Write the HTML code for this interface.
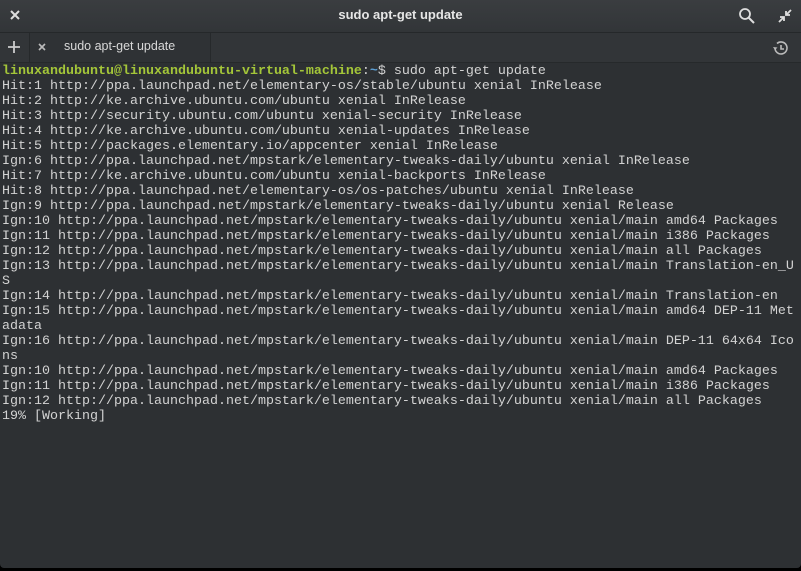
<!DOCTYPE html>
<html><head><meta charset="utf-8"><style>
html,body{margin:0;padding:0;width:801px;height:571px;overflow:hidden;background:#000;}
.win{position:absolute;left:0;top:0;width:801px;height:568px;background:#2d3033;border-radius:0 0 4px 4px;overflow:hidden;}
.title{position:absolute;left:0;top:0;width:801px;height:32px;background:linear-gradient(#3a3d40,#323538);border-bottom:1px solid #25282a;}
.title .t{position:absolute;left:0;right:0;top:7px;text-align:center;color:#e6e6e6;font:bold 13px "Liberation Sans",sans-serif;}
.tabs{position:absolute;left:0;top:33px;width:801px;height:29px;background:#323538;border-bottom:1px solid #26292b;}
.tab{position:absolute;left:29px;top:0;width:180px;height:29px;border-left:1px solid #26292b;border-right:1px solid #26292b;background:#2f3235;}
.tab span{position:absolute;left:34px;top:6px;color:#d8d8d8;font:12.5px "Liberation Sans",sans-serif;}
pre{position:absolute;left:2px;top:64px;margin:0;font:13.33px/15px "Liberation Mono",monospace;color:#d3d3d3;white-space:pre;}
.g{color:#a4c639;font-weight:bold}.b{color:#5c9fd4;font-weight:bold}
</style></head><body><div class="win">
<div class="title">
<svg style="position:absolute;left:10px;top:10px" width="10" height="10"><path d="M1 1L9 9M9 1L1 9" stroke="#ddd" stroke-width="2"/></svg>
<div class="t">sudo apt-get update</div>
<svg style="position:absolute;left:738px;top:7px" width="18" height="18"><circle cx="7" cy="7" r="5" fill="none" stroke="#ddd" stroke-width="1.8"/><path d="M11 11L16 16" stroke="#ddd" stroke-width="2"/></svg>
<svg style="position:absolute;left:777px;top:8px" width="16" height="16"><path d="M14 2L9 7M9 3V7H13M2 14L7 9M3 9H7V13" stroke="#ddd" stroke-width="1.8" fill="none"/></svg>
</div>
<div class="tabs">
<svg style="position:absolute;left:8px;top:8px" width="12" height="12"><path d="M6 0V12M0 6H12" stroke="#ccc" stroke-width="1.8"/></svg>
<div class="tab"><svg style="position:absolute;left:8px;top:10px" width="8" height="8"><path d="M1 1L7 7M7 1L1 7" stroke="#bbb" stroke-width="1.6"/></svg><span>sudo apt-get update</span></div>
<svg style="position:absolute;left:771px;top:6px" width="18" height="18"><path d="M4 9A6 6 0 1 0 6 4.5" fill="none" stroke="#bbb" stroke-width="1.6"/><path d="M2 8L4 11L6.5 8.5Z" fill="#bbb"/><path d="M10 6V10H13" fill="none" stroke="#bbb" stroke-width="1.6"/></svg>
</div>
<pre><span class="g">linuxandubuntu@linuxandubuntu-virtual-machine</span>:<span class="b">~</span>$ sudo apt-get update
Hit:1 http://ppa.launchpad.net/elementary-os/stable/ubuntu xenial InRelease
Hit:2 http://ke.archive.ubuntu.com/ubuntu xenial InRelease
Hit:3 http://security.ubuntu.com/ubuntu xenial-security InRelease
Hit:4 http://ke.archive.ubuntu.com/ubuntu xenial-updates InRelease
Hit:5 http://packages.elementary.io/appcenter xenial InRelease
Ign:6 http://ppa.launchpad.net/mpstark/elementary-tweaks-daily/ubuntu xenial InRelease
Hit:7 http://ke.archive.ubuntu.com/ubuntu xenial-backports InRelease
Hit:8 http://ppa.launchpad.net/elementary-os/os-patches/ubuntu xenial InRelease
Ign:9 http://ppa.launchpad.net/mpstark/elementary-tweaks-daily/ubuntu xenial Release
Ign:10 http://ppa.launchpad.net/mpstark/elementary-tweaks-daily/ubuntu xenial/main amd64 Packages
Ign:11 http://ppa.launchpad.net/mpstark/elementary-tweaks-daily/ubuntu xenial/main i386 Packages
Ign:12 http://ppa.launchpad.net/mpstark/elementary-tweaks-daily/ubuntu xenial/main all Packages
Ign:13 http://ppa.launchpad.net/mpstark/elementary-tweaks-daily/ubuntu xenial/main Translation-en_U
S
Ign:14 http://ppa.launchpad.net/mpstark/elementary-tweaks-daily/ubuntu xenial/main Translation-en
Ign:15 http://ppa.launchpad.net/mpstark/elementary-tweaks-daily/ubuntu xenial/main amd64 DEP-11 Met
adata
Ign:16 http://ppa.launchpad.net/mpstark/elementary-tweaks-daily/ubuntu xenial/main DEP-11 64x64 Ico
ns
Ign:10 http://ppa.launchpad.net/mpstark/elementary-tweaks-daily/ubuntu xenial/main amd64 Packages
Ign:11 http://ppa.launchpad.net/mpstark/elementary-tweaks-daily/ubuntu xenial/main i386 Packages
Ign:12 http://ppa.launchpad.net/mpstark/elementary-tweaks-daily/ubuntu xenial/main all Packages
19% [Working]</pre>
</div></body></html>
